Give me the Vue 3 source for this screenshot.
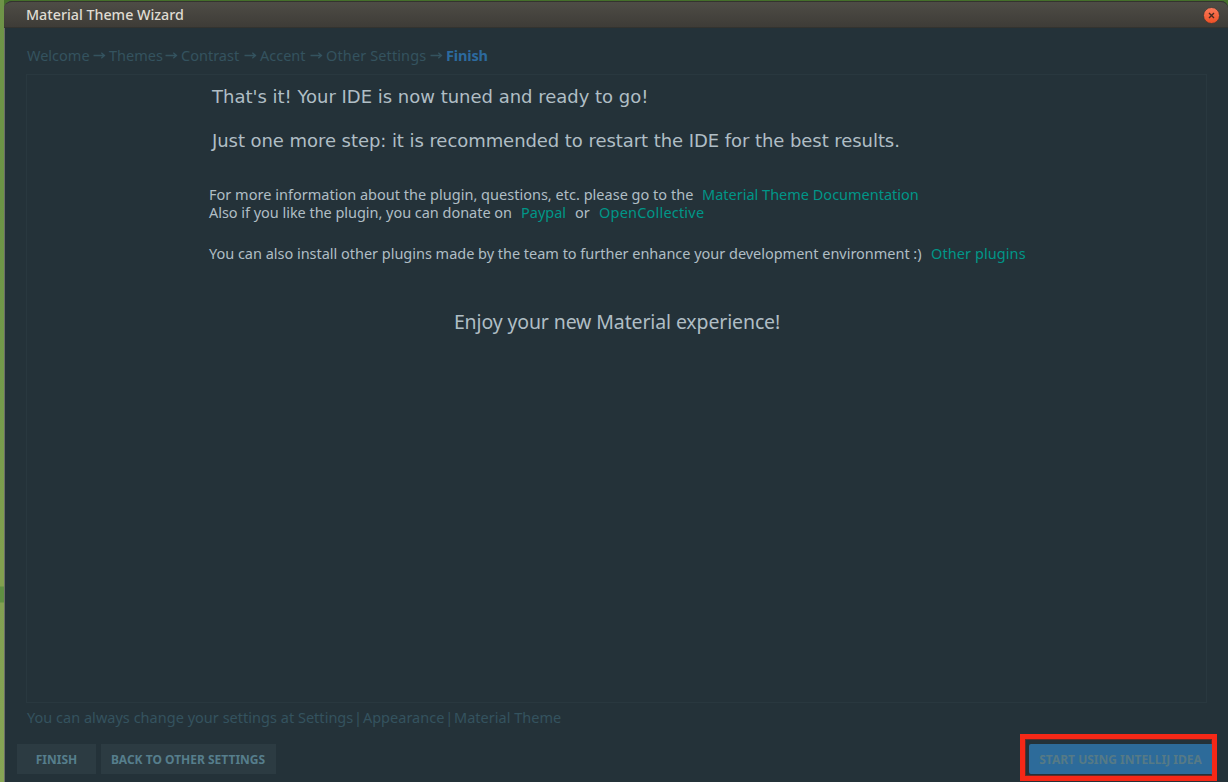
<script setup>
const steps = [
  { label: 'Welcome', width: 63 },
  { label: 'Themes', width: 53 },
  { label: 'Contrast', width: 60 },
  { label: 'Accent', width: 47 },
  { label: 'Other Settings', width: 101 },
]
</script>

<template>
  <div class="desktop">
    <div class="window">
      <header class="titlebar">
        <span class="title">Material Theme Wizard</span>
        <svg class="close" viewBox="0 0 18 18" width="18" height="18">
          <defs>
            <linearGradient id="closeFill" x1="0" y1="0" x2="0" y2="1">
              <stop offset="0" stop-color="#fb7b5c" />
              <stop offset="1" stop-color="#ee4f24" />
            </linearGradient>
          </defs>
          <circle cx="9.5" cy="9.5" r="8" fill="url(#closeFill)" stroke="#3a3833" stroke-width="0.8" />
          <path d="M7 7l5 5M12 7l-5 5" stroke="#452a20" stroke-width="1.4" />
        </svg>
      </header>

      <nav class="steps">
        <template v-for="s in steps" :key="s.label">
          <span class="step" :style="{ width: s.width + 'px' }">{{ s.label }}</span>
          <svg class="arrow" viewBox="0 0 19 12" width="19" height="12">
            <path d="M3.5 6.5h11M11.3 3.7l3.2 2.8l-3.2 2.8" />
          </svg>
        </template>
        <span class="current">Finish</span>
      </nav>

      <main class="panel">
        <h1 class="lead first">That's it! Your IDE is now tuned and ready to go!</h1>
        <h1 class="lead second">Just one more step: it is recommended to restart the IDE for the best results.</h1>
        <p class="line info"><span class="w1">For more information about the plugin, questions, etc. please go to the</span><a class="l1">Material Theme Documentation</a></p>
        <p class="line"><span class="w2">Also if you like the plugin, you can donate on</span><a class="w3">Paypal</a><span class="w4">or</span><a class="l2">OpenCollective</a></p>
        <p class="line more"><span class="w5">You can also install other plugins made by the team to further enhance your development environment :)</span><a class="l3">Other plugins</a></p>
        <p class="enjoy">Enjoy your new Material experience!</p>
      </main>

      <p class="hint">You can always change your settings at Settings<span class="sep"> | </span>Appearance<span class="sep"> | </span>Material Theme</p>

      <footer class="actions">
        <button class="btn finish">FINISH</button>
        <button class="btn back">BACK TO OTHER SETTINGS</button>
        <div class="highlight"><button class="btn primary">START USING INTELLIJ IDEA</button></div>
      </footer>
    </div>
  </div>
</template>

<style>
html, body { margin: 0; overflow: hidden; background: #243239; }
</style>

<style scoped>
* { box-sizing: border-box; }
.desktop {
  width: 1228px; height: 782px; padding: 1px 0 0 4px; overflow: hidden;
  background: linear-gradient(90deg, transparent 4px, #456f2b 4px) , linear-gradient(#6f9448 0, #6c9446 200px, #759b4c 400px, #82a04f 560px, #82a04f 586px, #5f8f42 587px, #5f8f42 602px, #82a052 603px, #87a555 782px);
  font-family: "Noto Sans", "Open Sans", sans-serif;
}
.window {
  height: 781px; display: flex; flex-direction: column;
  background: #243239; border-left: 1px solid #6c6d69; border-radius: 8px 7px 0 0;
}
.titlebar {
  flex: none; height: 27px; margin-left: -1px; padding: 0 8px 0 22px; display: flex; align-items: center; justify-content: space-between;
  background: linear-gradient(#4e4c46, #3e3c37); border-top: 1px solid #34332f; border-bottom: 1px solid #33332f; border-radius: 8px 7px 0 0;
}
.title { font-size: 14.3px; font-weight: 500; color: #dfdbd2; letter-spacing: -0.02px; line-height: 20px; }
.close { display: block; margin-top: 1px; }
.steps { flex: none; height: 46px; padding: 8px 0 0 22px; display: flex; align-items: center; color: #34535f; font-size: 14.5px; white-space: nowrap; }
.step { flex: none; }
.step:nth-last-of-type(2) { letter-spacing: 0.12px; }
.arrow { flex: none; fill: none; stroke: #34535f; stroke-width: 1.3; }
.current { color: #2c6a9f; font-weight: 700; letter-spacing: -0.15px; }
.panel { flex: none; width: 1181px; height: 629px; margin-left: 21px; border: 1px solid #29383f; color: #b0bec5; white-space: nowrap; }
.lead { margin: 0; padding-left: 185px; font: 400 18px/22px "DejaVu Sans", sans-serif; }
.first { margin-top: 11px; letter-spacing: -0.01px; }
.second { margin-top: 22px; letter-spacing: -0.062px; }
.line { margin: 0; padding-left: 182px; height: 18px; line-height: 18px; font-size: 14.5px; display: flex; }
.line > * { flex: none; }
.line a { color: #009688; }
.info { margin-top: 33px; }
.more { margin-top: 23px; }
.w1 { width: 493px; letter-spacing: 0.015px; }
.w2 { width: 312px; letter-spacing: -0.035px; }
.w3 { width: 54px; }
.w4 { width: 24px; }
.w5 { width: 722px; letter-spacing: -0.02px; }
.l2 { letter-spacing: 0.2px; }
.l3 { letter-spacing: 0.08px; }
.enjoy { margin: 46px 0 0 1px; text-align: center; font-size: 19.5px; line-height: 28px; letter-spacing: -0.13px; }
.hint { flex: none; margin: 4px 0 0 22px; font-size: 14.5px; line-height: 20px; letter-spacing: 0.02px; color: #34535f; white-space: nowrap; }
.sep { margin: 0 -0.5px; word-spacing: -2.5px; }
.actions { flex: none; display: flex; margin: 7px 11px 0 12px; height: 47px; align-items: flex-start; }
.btn { border: 0; padding: 2px 0 0; height: 30px; font: 700 12px/28px "Noto Sans", sans-serif; color: #567e8c; background: #2c3b42; white-space: nowrap; }
.finish { width: 79px; margin-top: 10px; }
.back { width: 175px; margin: 10px 0 0 5px; padding-right: 1px; }
.highlight { width: 197px; height: 47px; margin-left: auto; padding: 5px 0 0 4px; border: 5px solid #f62817; box-shadow: inset 0 0 0 1px #642c29; }
.primary { width: 183px; background: #2d6b9a; color: #567a86; border-radius: 2px 0 0 2px; display: block; }
</style>
